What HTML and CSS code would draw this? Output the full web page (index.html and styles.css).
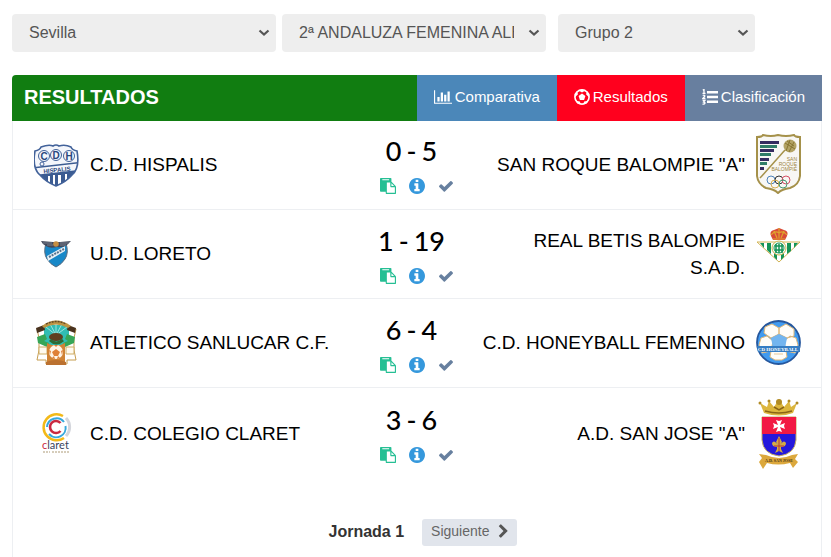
FILE: index.html
```html
<!DOCTYPE html>
<html lang="es">

<head>
    <meta charset="UTF-8">
    <meta name="viewport" content="width=device-width, initial-scale=1.0">
    <title>Resultados</title>
    <link rel="stylesheet" href="styles.css">
</head>

<body>
    <!-- Shared icons -->
    <svg class="sprite" aria-hidden="true">
        <symbol id="i-paste" viewBox="0 0 1792 1792">
            <path d="M768 1664h896v-640h-416q-40 0-68-28t-28-68v-416h-384v1152zm256-1440v-64q0-13-9.500-22.500t-22.500-9.500h-704q-13 0-22.500 9.500t-9.500 22.500v64q0 13 9.500 22.500t22.500 9.500h704q13 0 22.500-9.500t9.500-22.500zm256 672h299l-299-299v299zm512 128v672q0 40-28 68t-68 28h-960q-40 0-68-28t-28-68v-160h-544q-40 0-68-28t-28-68v-1344q0-40 28-68t68-28h1088q40 0 68 28t28 68v328q21 13 36 28l408 408q28 28 48 76t20 88z" />
        </symbol>
        <symbol id="i-info" viewBox="128 128 1536 1536">
            <path d="M1152 1376v-160q0-14-9-23t-23-9h-96v-512q0-14-9-23t-23-9h-320q-14 0-23 9t-9 23v160q0 14 9 23t23 9h96v320h-96q-14 0-23 9t-9 23v160q0 14 9 23t23 9h448q14 0 23-9t9-23zm-128-896v-160q0-14-9-23t-23-9h-192q-14 0-23 9t-9 23v160q0 14 9 23t23 9h192q14 0 23-9t9-23zm640 416q0 209-103 385.500t-279.500 279.500-385.500 103-385.500-103-279.500-279.500-103-385.500 103-385.500 279.500-279.500 385.500-103 385.500 103 279.500 279.500 103 385.500z" />
        </symbol>
        <symbol id="i-check" viewBox="121 128 1550 1536">
            <path d="M1671 566q0 40-28 68l-724 724-136 136q-28 28-68 28t-68-28l-136-136-362-362q-28-28-28-68t28-68l136-136q28-28 68-28t68 28l294 295 656-657q28-28 68-28t68 28l136 136q28 28 28 68z" />
        </symbol>
        <symbol id="i-next" viewBox="0 0 1792 1792">
            <path d="M1363 877l-742 742q-19 19-45 19t-45-19l-166-166q-19-19-19-45t19-45l531-531-531-531q-19-19-19-45t19-45l166-166q19-19 45-19t45 19l742 742q19 19 19 45t-19 45z" />
        </symbol>
        <symbol id="i-down" viewBox="0 0 12 8">
            <path d="M1.500 1.500L6 5.500l4.500-4" fill="none" stroke="currentColor" stroke-width="2.200" />
        </symbol>
    </svg>

    <form class="filters">
        <div class="filter">
            <select aria-label="Provincia">
                <option>Sevilla</option>
            </select>
            <svg class="arrow"><use href="#i-down" /></svg>
        </div>
        <div class="filter">
            <select aria-label="Competición">
                <option>2ª ANDALUZA FEMENINA ALEVIN</option>
            </select>
            <svg class="arrow"><use href="#i-down" /></svg>
        </div>
        <div class="filter group">
            <select aria-label="Grupo">
                <option>Grupo 2</option>
            </select>
            <svg class="arrow"><use href="#i-down" /></svg>
        </div>
    </form>

    <header class="header">
        <h1 class="title">RESULTADOS</h1>
        <nav class="tabs">
            <a href="#" class="tab compare">
                <svg width="18" height="16" viewBox="0 0 2048 1792"><path fill="currentColor" d="M640 896v512h-256v-512h256zm384-512v1024h-256v-1024h256zm1024 1152v128h-2048v-1536h128v1408h1920zm-640-896v768h-256v-768h256zm384-384v1152h-256v-1152h256z" /></svg>
                Comparativa
            </a>
            <a href="#" class="tab active">
                <svg width="16" height="16" viewBox="0 0 16 16">
                    <circle cx="8" cy="8" r="7.100" fill="none" stroke="#fff" stroke-width="1.600" />
                    <path fill="#fff" d="M8 4.600l3.400 2.500-1.300 3.900H5.900L4.600 7.100zM4.200 1.300L8 3.600l3.800-2.300L8 .5zM.8 8.500l3.200-3.200-1-3.300L.5 5zM15.200 8.500l-3.200-3.200 1-3.300L15.500 5zM1.800 11.800l4 .6 1.200 3-3.800-1zM14.200 11.800l-4 .6-1.200 3 3.800-1z" />
                </svg>
                Resultados
            </a>
            <a href="#" class="tab table">
                <svg width="16" height="16" viewBox="0 0 16 16">
                    <path fill="#fff" d="M5 2h11v2.400H5zM5 6.800h11v2.400H5zM5 11.600h11V14H5z" />
                    <path fill="none" stroke="#fff" stroke-width="1.300" d="M.8 1.200L2 .6V4M.5 4.300h3M.7 6.500c2-1 2.600.4 1.400 1.500L.8 9.500h2.600M.6 11.500h2.300l-1.200 1.600c2 0 1.700 2.500-1.200 2" />
                </svg>
                Clasificación
            </a>
        </nav>
    </header>

    <main class="panel">
        <table class="matches">
            <colgroup>
                <col class="col-crest">
                <col class="col-team">
                <col>
                <col class="col-team">
                <col class="col-crest-away">
            </colgroup>
            <tbody>
                <tr>
                    <td class="crest home">
                        <svg width="45" height="45" viewBox="0 0 45 45" role="img" aria-label="C.D. Hispalis">
                            <defs>
                                <clipPath id="hispalis"><path d="M1 9q5-1 6-4 9-1 15-2 6 1 15 2 1 3 6 4c2 11 1 19-5 24q-6 7-16 11Q12 40 6 33C0 28-1 20 1 9z" /></clipPath>
                            </defs>
                            <g clip-path="url(#hispalis)">
                                <path fill="#f4f6fb" d="M0 0h45v45H0z" />
                                <path fill="#3c5c92" d="M4 34l36-4v14H4zM0 25l45-5v1.500L0 26.500zM0 33l45-5v3L0 36z" />
                                <path fill="#fff" d="M14 34h2v10h-2zM19 33h2v12h-2zM24 33h3v12h-3zM31 32h2v11h-2z" />
                            </g>
                            <path d="M1 9q5-1 6-4 8-3 12-1 3-2 6 0 6-2 12 1 1 3 6 4c2 11 1 19-5 24q-6 7-16 11Q12 40 6 33C0 28-1 20 1 9z" fill="none" stroke="#42629a" stroke-width="1.600" />
                            <g fill="none" stroke="#42629a"><circle cx="10" cy="14" r="5.500" /><circle cx="22" cy="13" r="5.500" /><circle cx="35" cy="14" r="5.500" /><circle cx="8" cy="22" r="2" /></g>
                            <g fill="#29477d" font-family="Liberation Sans, sans-serif" font-weight="bold" text-anchor="middle"><text x="10" y="18" font-size="10">C</text><text x="22" y="17" font-size="10">D</text><text x="35" y="18" font-size="10">H</text><text x="23" y="30" font-size="6" transform="rotate(-6 23 28)">HISPALIS</text></g>
                        </svg>
                    </td>
                    <td class="team">C.D. HISPALIS</td>
                    <td class="result">
                        <div class="score"><span>0</span><span>-</span><span>5</span></div>
                        <div class="actions">
                            <a href="#" class="report" aria-label="Acta"><svg><use href="#i-paste" /></svg></a>
                            <a href="#" class="info" aria-label="Información"><svg><use href="#i-info" /></svg></a>
                            <a href="#" class="done" aria-label="Finalizado"><svg><use href="#i-check" /></svg></a>
                        </div>
                    </td>
                    <td class="team away">SAN ROQUE BALOMPIE "A"</td>
                    <td class="crest">
                        <svg width="45" height="60" viewBox="0 0 45 60" role="img" aria-label="San Roque Balompie">
                            <path d="M1 3q5 0 6-2 8 2 15 0 8 2 16 0 1 2 6 2v39q-1 9-10 12-8 1-12 5-4-4-12-5Q2 50 1 42z" fill="#f8f7f4" stroke="#a5914a" stroke-width="2" />
                            <g fill="#352b60"><path d="M4 7h19v3H4zM4 15h14v3H4zM4 24h9v3H4zM4 33h4v3H4z" /></g>
                            <g fill="#317d68"><path d="M4 11h17v3H4zM4 19h11v3H4zM4 28h7v3H4z" /></g>
                            <path d="M4 44L29 16" stroke="#a5914a" stroke-width="1.500" />
                            <circle cx="34" cy="12" r="6.500" fill="#b3a364" />
                            <path d="M29 9l10 6M31 7l7 5M34 6l-4 11M38 8l-5 10" stroke="#887632" fill="none" />
                            <g fill="#9c8540" font-family="Liberation Sans, sans-serif" font-size="5" text-anchor="end"><text x="41" y="27">SAN</text><text x="41" y="32">ROQUE</text><text x="41" y="37">BALOMPIÉ</text></g>
                            <g fill="none"><circle cx="15" cy="46" r="4" stroke="#4d83ba" /><circle cx="23" cy="46" r="4" stroke="#333" /><circle cx="30" cy="46" r="4" stroke="#d65267" /><circle cx="19" cy="50" r="4" stroke="#d8af4f" /><circle cx="27" cy="50" r="4" stroke="#4a9b73" /></g>
                        </svg>
                    </td>
                </tr>
                <tr>
                    <td class="crest home">
                        <svg width="45" height="45" viewBox="0 0 45 45" role="img" aria-label="U.D. Loreto">
                            <path d="M12 12h20q3 10-1 16-3 5-9 8-6-3-9-8-4-6-1-16z" fill="#1888c8" stroke="#596c80" />
                            <path d="M13 25l18-10v5L14 30z" fill="#e8f1f7" />
                            <path d="M15 26l15-8" stroke="#58708a" stroke-width="2" stroke-dasharray="2 1" />
                            <path d="M7 10l12 1h7l11-1-4 4q-4 3-10 2-7 2-11-1-4-2-5-5z" fill="#43485a" />
                            <path d="M9 12h9M13 14h6M26 12h9M26 14h6" stroke="#797e8c" />
                            <circle cx="22" cy="13" r="2.800" fill="#c68e42" />
                        </svg>
                    </td>
                    <td class="team">U.D. LORETO</td>
                    <td class="result">
                        <div class="score"><span>1</span><span>-</span><span>19</span></div>
                        <div class="actions">
                            <a href="#" class="report" aria-label="Acta"><svg><use href="#i-paste" /></svg></a>
                            <a href="#" class="info" aria-label="Información"><svg><use href="#i-info" /></svg></a>
                            <a href="#" class="done" aria-label="Finalizado"><svg><use href="#i-check" /></svg></a>
                        </div>
                    </td>
                    <td class="team away">REAL BETIS BALOMPIE S.A.D.</td>
                    <td class="crest">
                        <svg width="45" height="54" viewBox="0 0 45 54" role="img" aria-label="Real Betis Balompie">
                            <path d="M1 15h43L23 35z" fill="#fff" stroke="#d2b455" />
                            <path d="M4 16h4v5zM11 16h4v11l-4-4zM18 16h3v17l-3-3zM25 16h3v14l-3 3zM31 16h4v8l-4 3zM38 16h4l-4 5z" fill="#159456" />
                            <circle cx="23" cy="21" r="7" fill="#f4f9f4" stroke="#cdb651" />
                            <circle cx="23" cy="21" r="5" fill="none" stroke="#159456" />
                            <path d="M20 17v9M23 17v9M26 17v9M19 19h8M19 23h8" stroke="#159456" stroke-width="1.500" />
                            <path d="M15 9q-2-5 3-6l5-2 5 2q5 1 3 6l-2 4H17z" fill="#d94b38" />
                            <path d="M15 8q4-5 8-2 4-3 8 2M18 4l3 7M23 1v10M28 4l-3 7M17 12h12" fill="none" stroke="#dfa42d" stroke-width="1.200" />
                        </svg>
                    </td>
                </tr>
                <tr>
                    <td class="crest home">
                        <svg width="45" height="45" viewBox="0 0 45 45" role="img" aria-label="Atletico Sanlucar">
                            <path d="M3 9h39l-2 9v12l2 10h-9v4H12v-4H3l2-10V18z" fill="#fff" stroke="#c69d51" />
                            <path d="M10 5h25v20H10z" fill="#31bdb4" />
                            <path d="M22 15L12 7M22 15L16 4M22 15V3M22 15l6-11M22 15l11-8" stroke="#9ee2dc" />
                            <path d="M3 17l8-3 2 5-3 2 5 2-2 4-9-4zM41 17l-8-3-2 5 3 2-5 2 2 4 9-4z" fill="#36a657" />
                            <path d="M5 27h8v7H5zM32 27h8v7h-8z" fill="#fffaf0" stroke="#cfae67" />
                            <path d="M2 8l8-3 1 5-8 3zM42 8l-8-3-1 5 8 3z" fill="#49321e" />
                            <path d="M8 6Q22-5 37 6l-3 2Q22 1 10 8z" fill="#bd9444" />
                            <path d="M12 4q10-5 20 0" stroke="#634927" stroke-width="1.500" stroke-dasharray="2 1" fill="none" />
                            <path d="M13 23q9 5 18 0v19H13z" fill="#d08336" />
                            <ellipse cx="22" cy="17" rx="7" ry="4" fill="#60401f" />
                            <path d="M16 20q6 6 13 0" stroke="#2e6b35" stroke-width="3" fill="none" />
                            <circle cx="22" cy="32" r="7" fill="#fff4e6" />
                            <path d="M22 29l4 3-2 4h-4l-2-4zM20 25h4l-2 2zM15 30l2 1-1 4zM29 30l-2 1 1 4zM18 38l2-2 1 3zM26 38l-2-2-1 3z" fill="#df8037" />
                            <path d="M12 42q10-4 20 0v3H12z" fill="#bb7130" />
                        </svg>
                    </td>
                    <td class="team">ATLETICO SANLUCAR C.F.</td>
                    <td class="result">
                        <div class="score"><span>6</span><span>-</span><span>4</span></div>
                        <div class="actions">
                            <a href="#" class="report" aria-label="Acta"><svg><use href="#i-paste" /></svg></a>
                            <a href="#" class="info" aria-label="Información"><svg><use href="#i-info" /></svg></a>
                            <a href="#" class="done" aria-label="Finalizado"><svg><use href="#i-check" /></svg></a>
                        </div>
                    </td>
                    <td class="team away">C.D. HONEYBALL FEMENINO</td>
                    <td class="crest">
                        <svg width="45" height="45" viewBox="0 0 45 45" role="img" aria-label="C.D. Honeyball">
                            <circle cx="22.500" cy="22.500" r="21.500" fill="#419bf0" stroke="#26579d" stroke-width="1.800" />
                            <g fill="#fffdf8" stroke="#dfb87b"><path d="M9 7l7-3 7 4v6l-8 4-7-5zM23 8l7-4 8 5v7l-7 2-8-4zM5 18l6-2 6 5-2 10-9 2-3-8zM40 18l-6-2-6 5 2 10 9 2 3-8zM15 31h15l1 6-5 3h-7l-5-3z" /></g>
                            <path d="M15 18l8-4 8 4-2 10H17z" fill="#73b5ef" />
                            <path d="M1 26h43v6H2z" fill="#357dc3" />
                            <text x="22" y="31" font-family="Liberation Serif, serif" font-size="5" font-weight="bold" text-anchor="middle" fill="#fff">CD HONEYBALL</text>
                            <path d="M18 34h9" stroke="#e9c896" />
                        </svg>
                    </td>
                </tr>
                <tr>
                    <td class="crest home">
                        <svg width="45" height="45" viewBox="0 0 45 45" role="img" aria-label="C.D. Colegio Claret">
                            <g fill="none">
                                <path d="M29 5A13 13 0 1 0 30 27" stroke="#f3b918" stroke-width="2.500" />
                                <path d="M32 7a13 13 0 0 1 0 18" stroke="#d4d6dc" stroke-width="3" />
                                <path d="M13 16A9.500 9.500 0 0 1 30 11M31.500 15A9.500 9.500 0 0 1 15 23" stroke="#36a8dc" stroke-width="2" />
                                <path d="M26.500 12a6 6 0 1 0 0 8" stroke="#c9283f" stroke-width="2.600" />
                            </g>
                            <text x="8" y="38" font-family="Lato, sans-serif" font-size="11" fill="#39445c"><tspan fill="#c9283f">c</tspan>laret</text>
                            <path d="M9 41h7M18 41h18" stroke="#c9bda5" stroke-width="1.500" stroke-dasharray="2 1" />
                        </svg>
                    </td>
                    <td class="team">C.D. COLEGIO CLARET</td>
                    <td class="result">
                        <div class="score"><span>3</span><span>-</span><span>6</span></div>
                        <div class="actions">
                            <a href="#" class="report" aria-label="Acta"><svg><use href="#i-paste" /></svg></a>
                            <a href="#" class="info" aria-label="Información"><svg><use href="#i-info" /></svg></a>
                            <a href="#" class="done" aria-label="Finalizado"><svg><use href="#i-check" /></svg></a>
                        </div>
                    </td>
                    <td class="team away">A.D. SAN JOSE "A"</td>
                    <td class="crest">
                        <svg width="45" height="71" viewBox="0 0 45 71" role="img" aria-label="A.D. San Jose">
                            <path d="M8 15L4 5l7 4 2-6 5 6 5-8 5 8 5-6 2 6 6-4-4 10q-14 5-29 0z" fill="#dcb63e" />
                            <path d="M9 13q14 4 27 0M18 9l5 3 5-3" fill="none" stroke="#896416" stroke-width="1.500" />
                            <g fill="#b18b24"><circle cx="4" cy="5" r="1.500" /><circle cx="13" cy="3" r="1.500" /><circle cx="23" cy="4" r="3" /><circle cx="33" cy="3" r="1.500" /><circle cx="41" cy="5" r="1.500" /></g>
                            <path d="M6 19h34v23q-1 14-17 16Q7 56 6 42z" fill="#2518dc" stroke="#c5ae61" />
                            <path d="M6 19h34v17H6z" fill="#f21943" />
                            <path d="M20 22l3 1 3-1-2 5 5-2-1 3 1 3-5-2 2 5-3-1-3 1 2-5-5 2 1-3-1-3 5 2z" fill="#fff" />
                            <path d="M23 38l3 6-2 3q4-6 6-2 0 4-5 4v2l2 4-4-2-4 2 2-4v-2q-5 0-5-4 2-4 6 2l-2-3z" fill="#d4ac45" />
                            <path d="M23 40v13M18 48h10" stroke="#b2363a" />
                            <path d="M3 56l7 1q13 6 26 0l6-1-3 5 3 3-5 6-3-5q-12 3-23 0l-4 6-4-7 3-4z" fill="#dca83c" />
                            <text x="23" y="64" font-family="Liberation Serif, serif" font-size="4" font-weight="bold" text-anchor="middle" fill="#4a3313">A.D. SAN JOSE</text>
                        </svg>
                    </td>
                </tr>
            </tbody>
        </table>

        <div class="pager">
            <span class="round">Jornada 1</span>
            <button type="button" class="next">Siguiente <svg><use href="#i-next" /></svg></button>
        </div>
    </main>
</body>

</html>
```
FILE: styles.css
```css
* {
    box-sizing: border-box;
}

body {
    display: flex;
    flex-direction: column;
    min-height: 100vh;
    margin: 0;
    padding: 14px 9px 0 12px;
    background: #fff;
    color: #000;
    font-family: 'Liberation Sans', Arial, sans-serif;
}

.sprite {
    display: none;
}

/* Filters */
.filters {
    display: flex;
    gap: 6px;
    margin-bottom: 23px;
}

.filter {
    position: relative;
    flex: 0 0 32.6%;
}

.filter.group {
    flex-basis: 24.3%;
    margin-left: 6px;
}

.filter select {
    display: block;
    width: 100%;
    height: 38px;
    padding: 0 32px 2px 17px;
    border: none;
    border-radius: 4px;
    background: #eee;
    color: #555;
    font-family: inherit;
    font-size: 16px;
    appearance: none;
}

.arrow {
    position: absolute;
    top: 15px;
    right: 6px;
    width: 12px;
    height: 8px;
    color: #555;
    pointer-events: none;
}

/* Header */
.header {
    display: flex;
    justify-content: space-between;
    background: #117d11;
    border-radius: 4px 0 0 0;
}

.title {
    margin: 0;
    padding-left: 12px;
    color: #fff;
    font-size: 20px;
    line-height: 44px;
}

.tabs {
    display: flex;
}

.tab {
    display: flex;
    align-items: center;
    gap: 3px;
    height: 46px;
    padding: 0 17px 2px;
    color: #fff;
    font-size: 15px;
    line-height: 20px;
    text-decoration: none;
}

.tab.compare {
    background: #4b87b9;
}

.tab.active {
    background: #ff001e;
}

.tab.table {
    background: #687f9f;
}

/* Matches */
.panel {
    flex: 1;
    border: solid #edeff2;
    border-width: 0 1px;
}

.matches {
    width: 100%;
    margin-top: -1px;
    table-layout: fixed;
    border-collapse: collapse;
}

.col-crest {
    width: 77px;
}

.col-crest-away {
    width: 76px;
}

.col-team {
    width: 33.4%;
}

.matches tr {
    height: 89px;
    border-bottom: 1px solid #edeff2;
}

.matches tr:last-child {
    border-bottom: none;
}

.matches td {
    padding: 10px 0;
    vertical-align: middle;
}

.matches .crest {
    padding-left: 11px;
}

.matches .crest.home {
    padding-left: 21px;
}

.crest svg {
    display: block;
}

.team {
    font-size: 19px;
    line-height: 27px;
}

.away {
    text-align: right;
}

.matches .result {
    padding: 8px 12px 0 0;
}

.score {
    display: flex;
    justify-content: center;
    gap: 5px;
    font-family: Lato, sans-serif;
    font-size: 27px;
    font-weight: 500;
    line-height: 36px;
}

.actions {
    display: flex;
    align-items: center;
    justify-content: center;
    gap: 13px;
    height: 34px;
    padding-left: 10px;
}

.actions svg {
    display: block;
    width: 16px;
    height: 16px;
    fill: currentColor;
}

.report {
    color: #26bf94;
}

.info {
    color: #3598dc;
}

.done {
    color: #67809f;
}

.done svg {
    padding: 1px;
}

/* Pager */
.pager {
    display: flex;
    align-items: center;
    justify-content: center;
    gap: 18px;
    padding: 40px 0 11px 12px;
}

.round {
    color: #333;
    font-size: 16px;
    font-weight: bold;
}

.next {
    display: flex;
    align-items: center;
    gap: 7px;
    height: 27px;
    padding: 0 6px 2px 9px;
    border: none;
    border-radius: 3px;
    background: #e1e5ec;
    color: #666;
    font-family: inherit;
    font-size: 14px;
    cursor: pointer;
}

.next svg {
    width: 15px;
    height: 15px;
    fill: #555;
}
```
